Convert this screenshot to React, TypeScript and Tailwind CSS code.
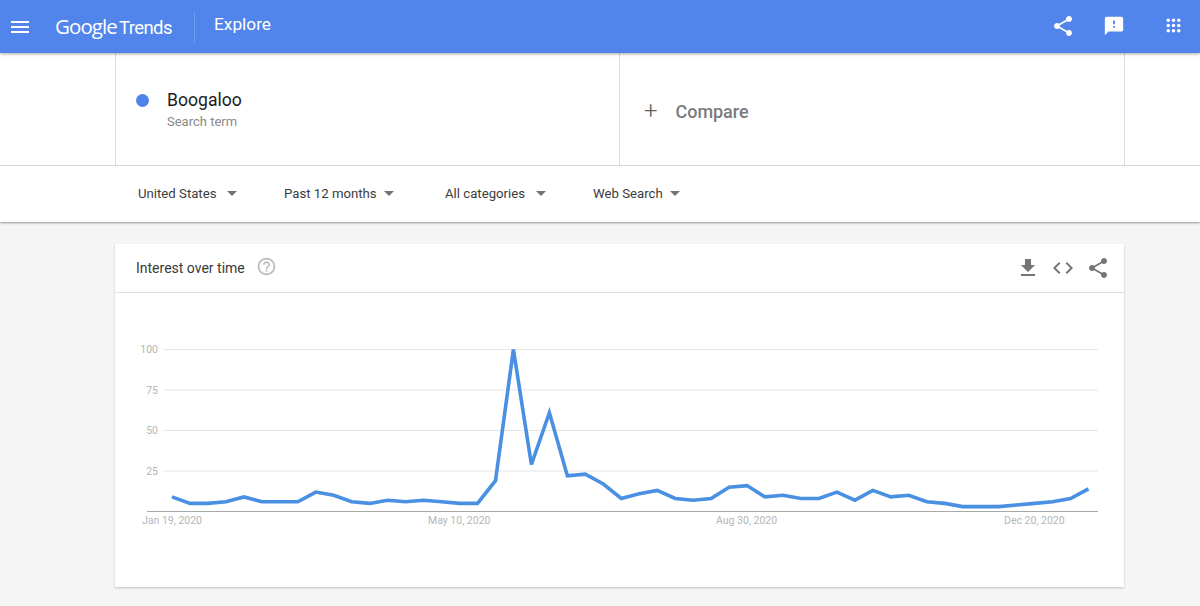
const font = "font-['Roboto',sans-serif]";

const icons = {
  menu: "M3 18h18v-2H3v2zm0-5h18v-2H3v2zm0-7v2h18V6H3z",
  share:
    "M18 16.08c-.76 0-1.44.3-1.96.77L8.91 12.7c.05-.23.09-.46.09-.7s-.04-.47-.09-.7l7.05-4.11c.54.5 1.25.81 2.04.81 1.66 0 3-1.34 3-3s-1.34-3-3-3-3 1.34-3 3c0 .24.04.47.09.7L8.04 9.81C7.5 9.31 6.79 9 6 9c-1.66 0-3 1.34-3 3s1.34 3 3 3c.79 0 1.5-.31 2.04-.81l7.12 4.16c-.05.21-.08.43-.08.65 0 1.61 1.31 2.92 2.92 2.92 1.61 0 2.92-1.31 2.92-2.92s-1.31-2.92-2.92-2.92z",
  feedback:
    "M20 2H4c-1.1 0-1.99.9-1.99 2L2 22l4-4h14c1.1 0 2-.9 2-2V4c0-1.1-.9-2-2-2zm-7 12h-2v-2h2v2zm0-4h-2V6h2v4z",
  download: "M19 9h-4V3H9v6H5l7 7 7-7zM5 18v2h14v-2H5z",
  code: "M9.4 16.6L4.8 12l4.6-4.6L8 6l-6 6 6 6 1.4-1.4zm5.2 0l4.6-4.6-4.6-4.6L16 6l6 6-6 6-1.4-1.4z",
  help: "M11 18h2v-2h-2v2zm1-16C6.48 2 2 6.48 2 12s4.48 10 10 10 10-4.48 10-10S17.52 2 12 2zm0 18c-4.41 0-8-3.59-8-8s3.59-8 8-8 8 3.59 8 8-3.59 8-8 8zm0-14c-2.21 0-4 1.79-4 4h2c0-1.1.9-2 2-2s2 .9 2 2c0 2-3 1.75-3 5h2c0-2.25 3-2.5 3-5 0-2.21-1.79-4-4-4z",
};

function Icon({ d, className }: { d: string; className: string }) {
  return (
    <svg viewBox="0 0 24 24" className={className} fill="currentColor">
      <path d={d} />
    </svg>
  );
}

/** Apps grid: the reference shows round dots, not squares. */
function AppsIcon() {
  const dots = [6, 12, 18];
  return (
    <svg viewBox="0 0 24 24" className="w-[21px] h-[21px] text-white" fill="currentColor">
      {dots.map((y) => dots.map((x) => <circle key={`${x}-${y}`} cx={x} cy={y} r="2" />))}
    </svg>
  );
}

function Header() {
  return (
    <header className="h-[53px] shrink-0 bg-[#5185ec] flex items-center text-white shadow-[0_1px_3px_rgba(0,0,0,0.35)] relative z-20">
      <Icon d={icons.menu} className="w-6 h-6 ml-2" />
      <div className="ml-[23px] w-[118px] flex items-baseline font-['Open_Sans',sans-serif] text-[20.5px] tracking-[-0.9px] whitespace-nowrap">
        <span>Google</span>
        <span className="ml-[2px] font-['Roboto',sans-serif] text-[18.5px] tracking-[-0.6px]">Trends</span>
      </div>
      <div className="w-px h-[30px] bg-white/20 ml-[21px]" />
      <div className={`${font} ml-[19px] text-[17.3px] -mt-[3px]`}>Explore</div>
      <div className="ml-auto flex items-center mr-[16px] -mt-[2px]">
        <Icon d={icons.share} className="w-6 h-6" />
        <Icon d={icons.feedback} className="w-[22px] h-[22px] ml-[28px]" />
        <div className="ml-[38px]">
          <AppsIcon />
        </div>
      </div>
    </header>
  );
}

function SearchRow() {
  return (
    <div className="h-[113px] shrink-0 bg-white border-b border-[#dcdcdc] pl-[115px] pr-[75px]">
      <div className="h-full flex border-x border-[#dcdcdc]">
        <div className="w-[504px] border-r border-[#dcdcdc] flex items-start pl-[20px] pt-[40px]">
          <div className="w-[13px] h-[13px] rounded-full bg-[#4f83ec] mt-[1px]" />
          <div className={`${font} ml-[18px]`}>
            <div className="text-[17.6px] leading-[14px] text-[#1c1c1c]">Boogaloo</div>
            <div className="text-[13px] leading-[14px] mt-[8px] text-[#8a8a8a]">Search term</div>
          </div>
        </div>
        <div className="flex-1 flex items-center pl-[24px] pt-[4px]">
          <span className={`${font} text-[24px] leading-none font-light text-[#5f5f5f]`}>+</span>
          <span className={`${font} ml-[18px] text-[18px] font-medium text-[#7b7b7b] tracking-[-0.05px]`}>Compare</span>
        </div>
      </div>
    </div>
  );
}

function Filter({ label, className, caretClass }: { label: string; className: string; caretClass: string }) {
  return (
    <div className={`flex items-center ${className}`}>
      <span className="whitespace-nowrap">{label}</span>
      <span className={`${caretClass} w-0 h-0 border-x-[5px] border-x-transparent border-t-[5px] border-t-[#757575]`} />
    </div>
  );
}

function FilterBar() {
  return (
    <div className={`${font} h-[56px] shrink-0 bg-white flex items-center pl-[138px] text-[13.2px] text-[#3c3c3c] shadow-[0_1px_2px_rgba(0,0,0,0.4)] relative z-10`}>
      <Filter label="United States" className="w-[146px]" caretClass="ml-[10px]" />
      <Filter label="Past 12 months" className="w-[161px]" caretClass="ml-[7px]" />
      <Filter label="All categories" className="w-[148px]" caretClass="ml-[11px]" />
      <Filter label="Web Search" className="" caretClass="ml-[7px]" />
    </div>
  );
}

const values = [
  9, 5, 5, 6, 9, 6, 6, 6, 12, 10, 6, 5, 7, 6, 7, 6, 5, 5, 19, 100, 29, 61, 22, 23, 17, 8, 11, 13, 8, 7, 8,
  15, 16, 9, 10, 8, 8, 12, 7, 13, 9, 10, 6, 5, 3, 3, 3, 4, 5, 6, 8, 14,
];

function Chart() {
  // card-local coordinates: card starts at x=115, chart svg starts at y=293
  const baseY = 218.5;
  const scale = 1.62;
  const points = values
    .map((v, i) => `${(57 + (i * 916.5) / 51).toFixed(1)},${(baseY - v * scale).toFixed(1)}`)
    .join(" ");
  const labelClass = "fill-[#b5b5b5] text-[10.5px]";
  return (
    <svg viewBox="0 0 1009 294" className={`${font} w-full h-[294px] block`}>
      {[100, 75, 50, 25].map((v) => (
        <g key={v}>
          <line x1="48" x2="983" y1={baseY - v * scale} y2={baseY - v * scale} stroke="#e6e6e6" strokeWidth="1" />
          <text x="43" y={baseY - v * scale + 3.5} textAnchor="end" className={labelClass}>
            {v}
          </text>
        </g>
      ))}
      <line x1="32" x2="983" y1={baseY} y2={baseY} stroke="#a8a8a8" strokeWidth="1" />
      <polyline points={points} fill="none" stroke="#4a90e2" strokeWidth="3.6" strokeLinejoin="miter" />
      <text x="27" y="231" className={labelClass}>Jan 19, 2020</text>
      <text x="313" y="231" className={labelClass}>May 10, 2020</text>
      <text x="601" y="231" className={labelClass}>Aug 30, 2020</text>
      <text x="889" y="231" className={labelClass}>Dec 20, 2020</text>
    </svg>
  );
}

function Card() {
  return (
    <section className="mx-[115px] mt-[22px] w-[1009px] h-[343px] bg-white shadow-[0_1px_2px_rgba(0,0,0,0.2)]">
      <div className="h-[49px] border-b border-[#e0e0e0] flex items-center pl-[21px] pr-[14px]">
        <span className={`${font} text-[14px] text-[#3a3a3a]`}>Interest over time</span>
        <Icon d={icons.help} className="w-[21px] h-[21px] ml-[11px] text-[#bdbdbd] -mt-[3px]" />
        <div className="ml-auto flex items-center gap-[11px] text-[#757575]">
          <Icon d={icons.download} className="w-6 h-6" />
          <Icon d={icons.code} className="w-6 h-6" />
          <Icon d={icons.share} className="w-6 h-6" />
        </div>
      </div>
      <Chart />
    </section>
  );
}

export default function App() {
  return (
    <div className="w-[1200px] h-[606px] overflow-hidden bg-[#f5f5f5] flex flex-col">
      <Header />
      <SearchRow />
      <FilterBar />
      <Card />
    </div>
  );
}
